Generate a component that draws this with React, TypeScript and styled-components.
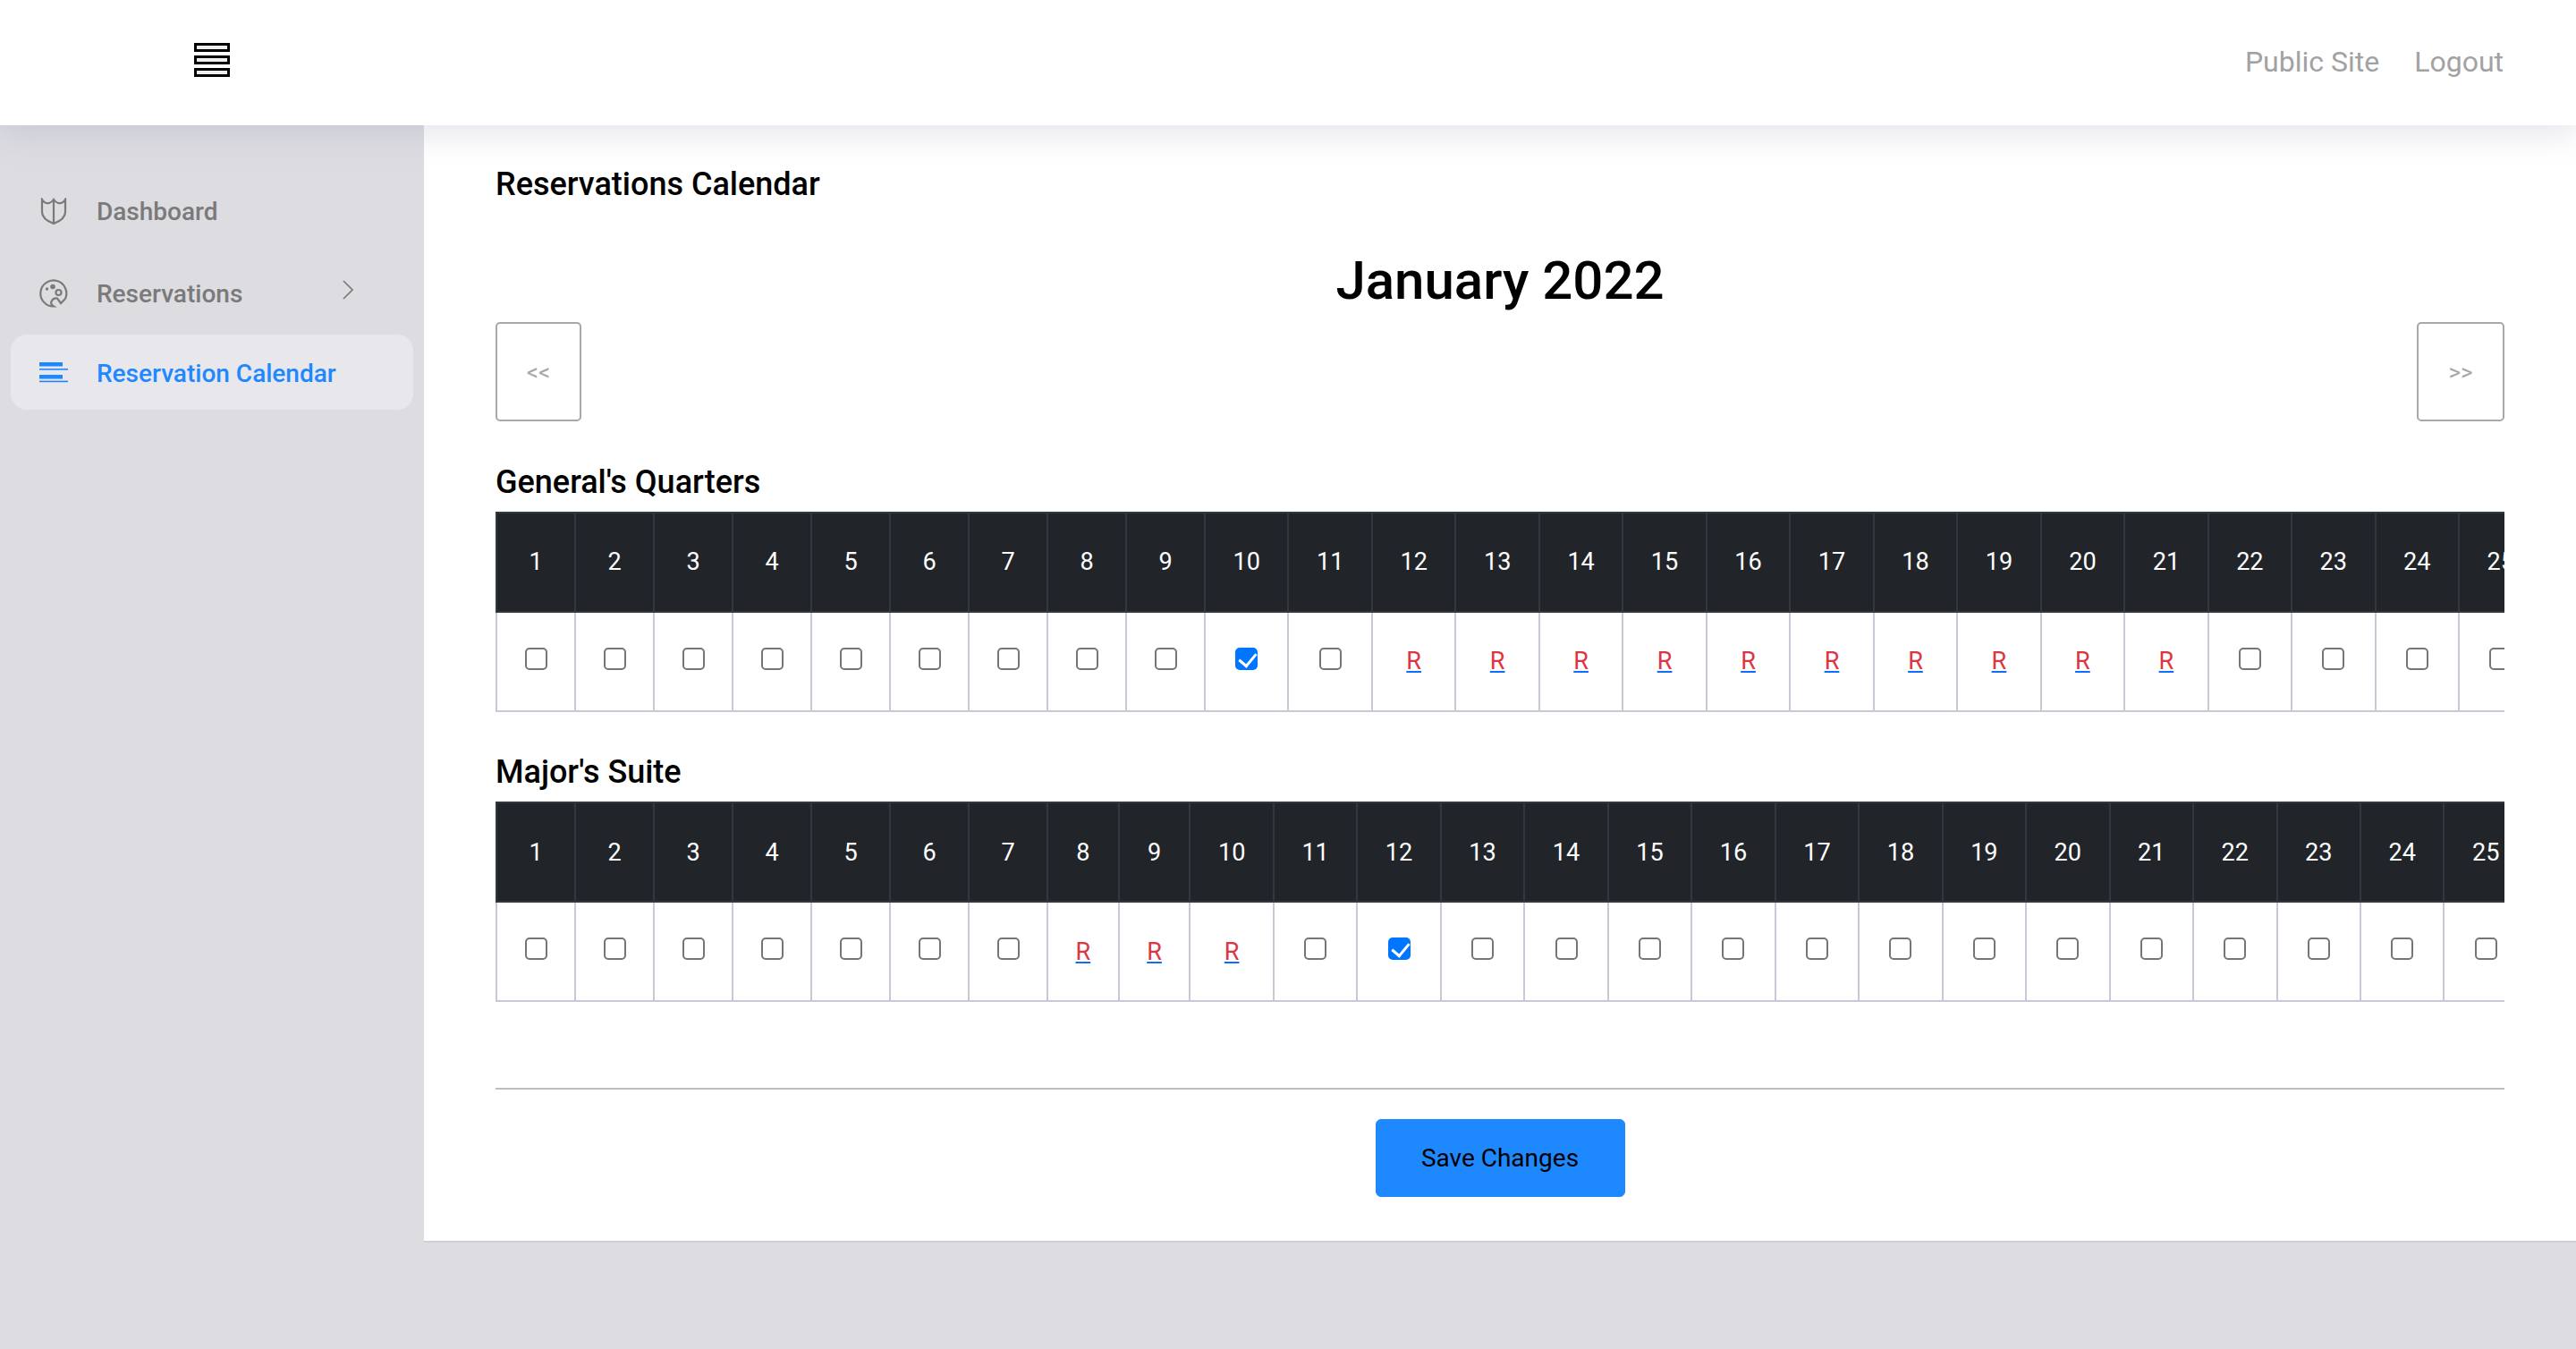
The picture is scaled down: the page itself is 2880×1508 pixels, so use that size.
import styled, { createGlobalStyle } from 'styled-components';

const GlobalStyle = createGlobalStyle`
  html, body {
    margin: 0;
    padding: 0;
    background: #dcdce1;
    font-family: Roboto, "Liberation Sans", sans-serif;
  }
  * {
    box-sizing: border-box;
  }
`

const Page = styled.div`
  display: flex;
  flex-direction: column;
  min-height: 1508px;
`
const TopBar = styled.header`
  position: relative;
  z-index: 2;
  display: flex;
  justify-content: space-between;
  align-items: center;
  height: 140px;
  padding: 0 81px 0 217px;
  background: #fff;
  box-shadow: 0 8px 34px rgba(150, 150, 185, 0.28);
`
const MenuButton = styled.div`
  display: flex;
  flex-direction: column;
  gap: 4px;
  width: 40px;
  margin-top: -6px;
  span {
    height: 10px;
    border: 3px solid #000;
    background: #eee;
  }
`
const TopLinks = styled.nav`
  display: flex;
  gap: 39px;
  margin-top: -2px;
  font-size: 32px;
  color: #a2a2a2;
`
const Body = styled.div`
  display: flex;
  align-items: flex-start;
`
const Sidebar = styled.aside`
  flex: none;
  width: 474px;
  padding: 54px 12px 0;
  display: flex;
  flex-direction: column;
  gap: 8px;
`
const NavItem = styled.div<{ $active?: boolean }>`
  display: flex;
  align-items: center;
  gap: 32px;
  height: 84px;
  padding: ${p => (p.$active ? '2px' : '0')} 32px 0;
  margin-top: ${p => (p.$active ? '-4px' : '0')};
  font-size: 28px;
  font-weight: 500;
  border-radius: 18px;
  color: ${p => (p.$active ? '#1e88ff' : '#7a7a7a')};
  background: ${p => (p.$active ? '#e7e7ec' : 'transparent')};
  svg {
    flex: none;
  }
  .chevron {
    margin: -8px 35px 0 auto;
  }
`
const IconSlot = styled.span`
  display: flex;
  justify-content: center;
  flex: none;
  width: 32px;
`
const Main = styled.main`
  flex: 1;
  min-width: 0;
  height: 1249px;
  padding: 42px 80px 0;
  background: #fff;
  border-bottom: 2px solid #cfcfd4;
`
const PageTitle = styled.h2`
  margin: 0;
  font-size: 36px;
  line-height: 48px;
  font-weight: 500;
  color: #000;
`
const MonthTitle = styled.h1`
  margin: 48px 0 0;
  text-align: center;
  font-size: 60px;
  line-height: 72px;
  font-weight: 500;
  color: #000;
`
const MonthNav = styled.div`
  display: flex;
  justify-content: space-between;
  margin-top: 10px;
`
const NavButton = styled.button<{ $wide?: boolean }>`
  width: ${p => (p.$wide ? '98px' : '96px')};
  height: 111px;
  padding: 0;
  background: #fff;
  border: 2px solid #a8a8a8;
  border-radius: 5px;
  font-family: Roboto, "Liberation Sans", sans-serif;
  font-size: 26px;
  color: #a8a8a8;
`
const RoomTitle = styled.h3`
  margin: 46.5px 0 12px;
  font-size: 36px;
  line-height: 42px;
  font-weight: 500;
  color: #000;
`
const TableClip = styled.div`
  overflow: hidden;
`
const CalendarTable = styled.table`
  width: max-content;
  border-collapse: collapse;
  font-size: 27.1px;
  th {
    height: 111px;
    padding: 0 30.5px;
    font-weight: 400;
    color: #fff;
    background: #212529;
    border: 2px solid #32383e;
  }
  td {
    height: 111px;
    padding: 0 30.5px;
    text-align: center;
    vertical-align: middle;
    background: #fff;
    border: 2px solid #c8c8d6;
    border-top: none;
  }
  a {
    color: #dc3545;
    text-decoration: underline;
    text-decoration-color: #0d6efd;
  }
`
const DayCheck = styled.input`
  display: block;
  position: relative;
  appearance: none;
  width: 25px;
  height: 25px;
  margin: -6px auto 0;
  background: #fff;
  border: 2px solid #767676;
  border-radius: 5px;
  &:checked {
    background: #0075ff;
    border-color: #0075ff;
  }
  &:checked::after {
    content: '';
    position: absolute;
    left: 6px;
    top: 0;
    width: 9px;
    height: 16px;
    border: solid #fff;
    border-width: 0 3px 3px 0;
    transform: rotate(40deg);
  }
`
const Divider = styled.hr`
  height: 2px;
  margin: 96px 0 0;
  border: none;
  background: #bdbdbd;
`
const SaveRow = styled.div`
  display: flex;
  justify-content: center;
  margin-top: 33px;
`
const SaveButton = styled.button`
  width: 279px;
  height: 87px;
  background: #1e88ff;
  border: 1px solid #1e88ff;
  border-radius: 6px;
  font-family: Roboto, "Liberation Sans", sans-serif;
  font-size: 28px;
  color: #000;
`

const DAYS = Array.from({ length: 25 }, (_, i) => i + 1)

const RoomCalendar = ({ name, reserved, checked }: { name: string; reserved: number[]; checked: number }) => (
  <>
    <RoomTitle>{name}</RoomTitle>
    <TableClip>
      <CalendarTable>
        <thead>
          <tr>
            {DAYS.map(d => <th key={d}>{d}</th>)}
          </tr>
        </thead>
        <tbody>
          <tr>
            {DAYS.map(d => (
              <td key={d}>
                {reserved.includes(d)
                  ? <a href="#r">R</a>
                  : <DayCheck type="checkbox" defaultChecked={d === checked} />}
              </td>
            ))}
          </tr>
        </tbody>
      </CalendarTable>
    </TableClip>
  </>
)

const ShieldIcon = () => (
  <svg width="30" height="30" viewBox="0 0 30 30" fill="none" stroke="#7a7a7a" strokeWidth="2.2">
    <path d="M2 2 Q5 7 10 6 Q13 5 15 2 Q17 5 20 6 Q25 7 28 2 V16 Q28 24 15 29 Q2 24 2 16 Z M15 2 V29" />
  </svg>
)

const PaletteIcon = () => (
  <svg width="32" height="32" viewBox="0 0 32 32" fill="none" stroke="#7a7a7a" strokeWidth="2.2">
    <path d="M29 22 A14.5 14.5 0 1 0 16 30.5 Q12 28 13.5 25 Q15.5 20.5 20 21.5 L24 27 L29 22" />
    <circle cx="8.5" cy="11" r="1.7" fill="#7a7a7a" stroke="none" />
    <circle cx="15" cy="8.5" r="2.8" fill="#7a7a7a" stroke="none" />
    <circle cx="21.5" cy="15" r="3" />
  </svg>
)

const ListIcon = () => (
  <svg width="32" height="24" viewBox="0 0 32 24" fill="#1e88ff">
    <rect x="0" y="0" width="26" height="4.5" />
    <rect x="0" y="7" width="32" height="1.6" />
    <rect x="0" y="14" width="26" height="4.5" />
    <rect x="0" y="20.6" width="32" height="1.6" />
  </svg>
)

const ChevronIcon = () => (
  <svg className="chevron" width="12" height="22" viewBox="0 0 12 22" fill="none" stroke="#7a7a7a" strokeWidth="1.6">
    <path d="M1 1 L11 11 L1 21" />
  </svg>
)

export default function App() {
  return (
    <Page>
      <GlobalStyle />
      <TopBar>
        <MenuButton><span /><span /><span /></MenuButton>
        <TopLinks>
          <span>Public Site</span>
          <span>Logout</span>
        </TopLinks>
      </TopBar>
      <Body>
        <Sidebar>
          <NavItem><IconSlot><ShieldIcon /></IconSlot>Dashboard</NavItem>
          <NavItem><IconSlot><PaletteIcon /></IconSlot>Reservations<ChevronIcon /></NavItem>
          <NavItem $active><IconSlot><ListIcon /></IconSlot>Reservation Calendar</NavItem>
        </Sidebar>
        <Main>
          <PageTitle>Reservations Calendar</PageTitle>
          <MonthTitle>January 2022</MonthTitle>
          <MonthNav>
            <NavButton>&lt;&lt;</NavButton>
            <NavButton $wide>&gt;&gt;</NavButton>
          </MonthNav>
          <RoomCalendar name="General's Quarters" reserved={[12, 13, 14, 15, 16, 17, 18, 19, 20, 21]} checked={10} />
          <RoomCalendar name="Major's Suite" reserved={[8, 9, 10]} checked={12} />
          <Divider />
          <SaveRow>
            <SaveButton>Save Changes</SaveButton>
          </SaveRow>
        </Main>
      </Body>
    </Page>
  )
}
